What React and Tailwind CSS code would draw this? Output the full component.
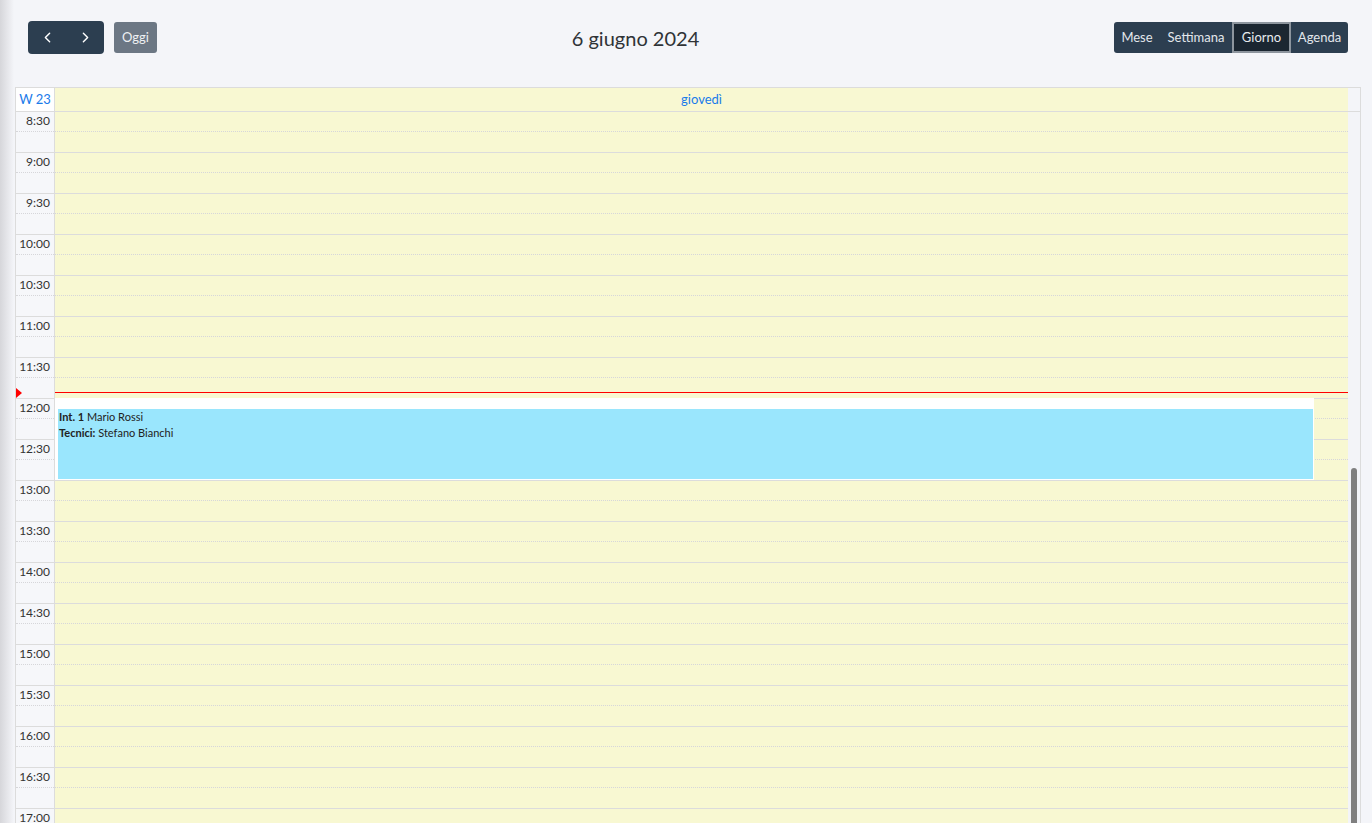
import { ChevronLeft, ChevronRight } from 'lucide-react';

const slots = [
  '8:30', '9:00', '9:30', '10:00', '10:30', '11:00', '11:30', '12:00', '12:30',
  '13:00', '13:30', '14:00', '14:30', '15:00', '15:30', '16:00', '16:30', '17:00', '17:30',
];

const views = [
  { label: 'Mese', w: 'w-[46px]' },
  { label: 'Settimana', w: 'w-[72px]' },
  { label: 'Giorno', w: 'w-[59px]' },
  { label: 'Agenda', w: 'w-[57px]' },
];

export default function App() {
  return (
    <div
      className="relative h-[823px] w-full overflow-hidden bg-[#f4f5f9] text-[#333]"
      style={{ fontFamily: 'Lato, "Noto Sans", sans-serif' }}
    >
      {/* sidebar shadow */}
      <div className="absolute left-0 top-0 h-full w-[14px] bg-gradient-to-r from-[#d6d6da] to-transparent" />

      {/* Toolbar */}
      <div className="flex items-center pl-[28px] pr-[24px] pt-[21px]">
        <div className="flex items-center gap-[10px]">
          <div className="flex h-[33px] w-[76px] overflow-hidden rounded-[4px] bg-[#2c3e50] text-white">
            <button className="flex w-[38px] items-center justify-center">
              <ChevronLeft size={17} strokeWidth={2} />
            </button>
            <button className="flex w-[38px] items-center justify-center">
              <ChevronRight size={17} strokeWidth={2} />
            </button>
          </div>
          <button className="h-[31px] w-[43px] rounded-[3px] bg-[#6c7784] text-[13px] text-[#eef0f3]">
            Oggi
          </button>
        </div>
        <div className="flex-1 text-center text-[20px] text-[#2f3337]">6 giugno 2024</div>
        <div className="flex h-[31px] overflow-hidden rounded-[3px] bg-[#2c3e50] text-[13px] text-[#e3e7ec]">
          {views.map((v) =>
            v.label === 'Giorno' ? (
              <button
                key={v.label}
                className={`${v.w} border-2 border-[#8d959e] bg-[#1b2631] text-[#e8ebee]`}
              >
                {v.label}
              </button>
            ) : (
              <button key={v.label} className={v.w}>
                {v.label}
              </button>
            )
          )}
        </div>
      </div>

      {/* Calendar */}
      <div className="relative ml-[15px] mr-[11px] mt-[33px] border border-[#dcdcdc] bg-[#f4f5f9]">
        {/* header */}
        <div className="flex h-[24px] border-b border-[#dcdcdc]">
          <div className="flex w-[39px] items-center justify-center border-r border-[#dcdcdc] bg-white text-[13px] text-[#1a7bea]">
            W 23
          </div>
          <div className="flex flex-1 items-center justify-center bg-[#f8f8d2] text-[13px] text-[#1a7bea]">
            giovedì
          </div>
          <div className="w-[12px]" />
        </div>

        {/* body */}
        <div className="relative flex h-[720px]">
          <div className="w-[39px] border-r border-[#dcdcdc] bg-[#f6f7fa]">
            {slots.map((s) => (
              <div key={s} className="h-[41px] border-b border-[#dcdcdc]">
                <div className="h-[20px] border-b border-dotted border-[#d6d6da] pr-[4px] pt-[1px] text-right text-[12px] leading-[16px] text-[#333]">
                  {s}
                </div>
              </div>
            ))}
          </div>
          <div className="relative flex-1 bg-[#f8f8d2]">
            {slots.map((s) => (
              <div key={s} className="h-[41px] border-b border-[#dcdcdc]">
                <div className="h-[20px] border-b border-dotted border-[#d6d6da]" />
              </div>
            ))}

            {/* now indicator */}
            <div className="absolute left-0 right-0 top-[280px] h-px bg-[#ff0000]" />

            {/* event */}
            <div className="absolute left-0 top-[286px] h-[82px] w-[1259px] bg-white pl-[3px] pr-[1px] pt-[11px]">
              <div className="h-[70px] bg-[#9ae6fd] px-[1px] text-[11px] leading-[16px] text-[#222]">
                <div>
                  <span className="font-bold">Int. 1</span> Mario Rossi
                </div>
                <div>
                  <span className="font-bold">Tecnici:</span> Stefano Bianchi
                </div>
              </div>
            </div>
          </div>
          <div className="relative w-[12px] bg-[#f3f4f8]">
            <div className="absolute left-[3px] top-[356px] h-[400px] w-[6px] rounded-t-full bg-[#7f7f7f]" />
          </div>

          {/* now arrow in gutter */}
          <div className="absolute left-0 top-[276px] h-0 w-0 border-y-[5px] border-l-[6px] border-y-transparent border-l-[#ff0000]" />
        </div>
      </div>
    </div>
  );
}
